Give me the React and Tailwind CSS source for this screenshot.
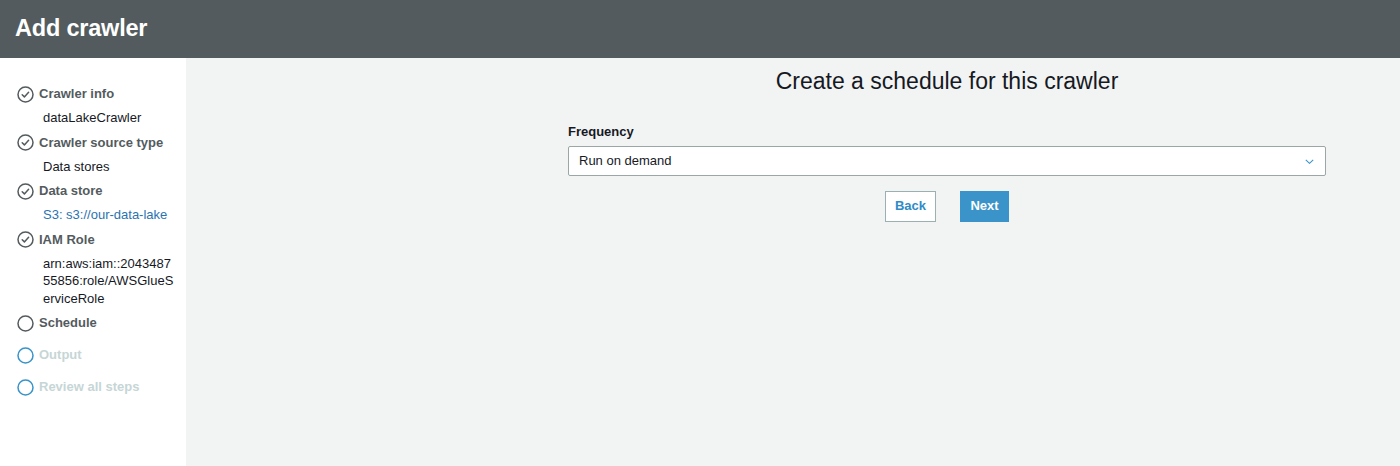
import { useState } from "react";

const steps = [
  { title: "Crawler info", done: true, sub: ["dataLakeCrawler"] },
  { title: "Crawler source type", done: true, sub: ["Data stores"] },
  { title: "Data store", done: true, sub: ["S3: s3://our-data-lake"], link: true },
  { title: "IAM Role", done: true, sub: ["arn:aws:iam::2043487", "55856:role/AWSGlueS", "erviceRole"] },
  { title: "Schedule", current: true },
  { title: "Output" },
  { title: "Review all steps" },
];

function StepIcon({ done, current }) {
  const color = done || current ? "#545b5e" : "#3a94c9";
  return (
    <svg width="17" height="17" viewBox="0 0 17 17" className="shrink-0">
      <circle cx="8.5" cy="8.5" r="7.5" fill="none" stroke={color} strokeWidth="1.5" />
      {done && (
        <path d="M5.2 8.7l2.2 2.2 4.2-4.6" fill="none" stroke={color} strokeWidth="1.5" strokeLinecap="round" strokeLinejoin="round" />
      )}
    </svg>
  );
}

export default function App() {
  const [frequency, setFrequency] = useState("Run on demand");

  return (
    <div className="h-[466px] flex flex-col font-['Liberation_Sans',Arial,sans-serif] bg-[#f2f4f4]">
      {/* header */}
      <div className="h-[58px] shrink-0 bg-[#545b5e] flex items-center px-[15px]">
        <h1 className="text-white text-[23.5px] font-bold tracking-[-0.2px]">Add crawler</h1>
      </div>

      <div className="flex flex-1">
        {/* steps */}
        <div className="w-[186px] shrink-0 bg-white pt-[27px] pl-[17px]">
          {steps.map((s) => (
            <div key={s.title} className={s.sub ? "mb-[7px]" : "mb-[14px]"}>
              <div className="flex items-center gap-[5px] h-[18px]">
                <StepIcon done={s.done} current={s.current} />
                <span
                  className={
                    "text-[13px] font-bold " +
                    (s.done || s.current ? "text-[#545b5e]" : "text-[#c6d6d6]")
                  }
                >
                  {s.title}
                </span>
              </div>
              {s.sub && (
                <div
                  className={
                    "pl-[26px] mt-[6px] text-[13px] leading-[17.5px] " +
                    (s.link ? "text-[#2b73b0]" : "text-[#16191f]")
                  }
                >
                  {s.sub.map((line) => (
                    <div key={line}>{line}</div>
                  ))}
                </div>
              )}
            </div>
          ))}
        </div>

        {/* main */}
        <div className="flex-1">
          <div className="ml-[382px] w-[758px] pt-[10px]">
            <h2 className="text-center text-[23px] text-[#16191f] leading-[27px]">
              Create a schedule for this crawler
            </h2>
            <label className="block mt-[27px] text-[13px] font-bold text-[#16191f]">Frequency</label>
            <div className="relative mt-[4px]">
              <select
                value={frequency}
                onChange={(e) => setFrequency(e.target.value)}
                className="w-full h-[30px] appearance-none bg-white border border-[#9ba7a6] rounded-[2px] pl-[10px] text-[13px] text-[#16191f] outline-none"
              >
                <option>Run on demand</option>
                <option>Hourly</option>
                <option>Daily</option>
                <option>Weekly</option>
                <option>Monthly</option>
              </select>
              <svg
                width="9"
                height="5"
                viewBox="0 0 9 5"
                className="absolute right-[12px] top-[13px] pointer-events-none"
              >
                <path d="M0.8 0.8l3.7 3.5 3.7-3.5" fill="none" stroke="#3a94c9" strokeWidth="1.1" />
              </svg>
            </div>
            <div className="flex justify-center gap-[24px] mt-[15px]">
              <button className="w-[51px] h-[31px] bg-white border border-[#9bb0b0] text-[#2e8bc7] text-[13px] font-bold">
                Back
              </button>
              <button className="w-[49px] h-[31px] bg-[#3a94c9] text-white text-[13px] font-bold">
                Next
              </button>
            </div>
          </div>
        </div>
      </div>
    </div>
  );
}
